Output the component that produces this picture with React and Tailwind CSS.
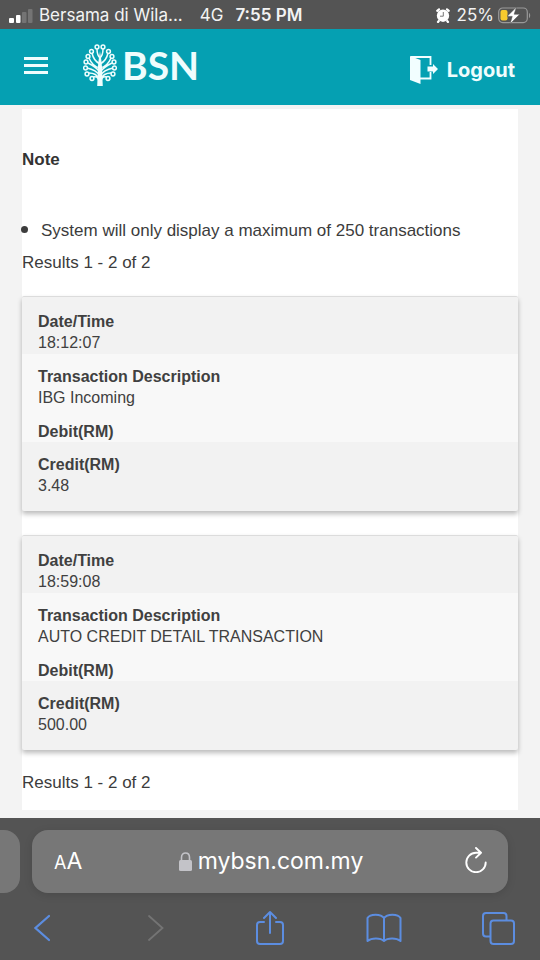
import React from "react";

const transactions = [
  { time: "18:12:07", description: "IBG Incoming", debit: "", credit: "3.48" },
  { time: "18:59:08", description: "AUTO CREDIT DETAIL TRANSACTION", debit: "", credit: "500.00" },
];

function SignalBars() {
  return (
    <svg width="25" height="14" viewBox="0 0 25 14" aria-hidden="true">
      <rect x="0" y="9" width="5" height="5" rx="1" fill="#fff" />
      <rect x="7" y="6" width="4.500" height="8" rx="1" fill="#fff" />
      <rect x="13" y="3" width="4.500" height="11" rx="1" fill="#747474" />
      <rect x="19" y="0" width="4.500" height="14" rx="1" fill="#747474" />
    </svg>
  );
}

function AlarmIcon() {
  return (
    <svg width="14" height="15" viewBox="0 0 14 15" aria-hidden="true">
      <circle cx="7" cy="7.700" r="6.200" fill="#fff" />
      <path d="M1.200 2.800 3 1.300M12.800 2.800 11 1.300M2.800 13l-.8 1M11.200 13l.8 1" stroke="#fff" strokeWidth="2.200" strokeLinecap="round" />
      <path d="M7.300 4v4.200H4" fill="none" stroke="#6a6a6a" strokeWidth=".9" />
    </svg>
  );
}

function BatteryIcon() {
  return (
    <svg width="34" height="17" viewBox="0 0 34 17" aria-hidden="true">
      <rect x=".7" y="1" width="28.600" height="14.600" rx="4" fill="none" stroke="#999" strokeWidth="1.200" />
      <path d="M31 6v5c1.600-.4 1.600-4.600 0-5z" fill="#999" />
      <rect x="2.500" y="3" width="7" height="10.600" rx="2" fill="#f8cb2e" />
      <path d="M18.500 0 9 9.400h5.200L12 17l9.800-9.800h-5.600z" fill="#fff" stroke="#545454" strokeWidth=".6" />
    </svg>
  );
}

const leaves = [
  [14, 3], [20, 3], [8.500, 7.500], [25.500, 7.500], [5, 12.500], [29, 12.500], [3, 18], [31, 18],
  [2.500, 24], [31.500, 24], [4, 30], [30, 30], [9, 34.500], [25, 34.500],
];

function TreeLogo() {
  return (
    <svg width="34" height="43" viewBox="0 0 34 43" fill="none" stroke="#effdfd" aria-hidden="true">
      <path d="M17 7c.8 6 1.600 9 2.100 17 .2 7 .4 11 .7 18h-5.600c.3-7 .5-11 .7-18C15.400 16 16.200 13 17 7z" fill="#effdfd" stroke="none" />
      <path
        d="M17 14c-2-2-3-5-3-9M17 14c2-2 3-5 3-9M17 20c-4-2-7-6-8-11M17 20c4-2 7-6 8-11M17 24c-5-1-9-5-11-10M17 24c5-1 9-5 11-10M17 28c-4-5-8-7-12-9M17 28c4-5 8-7 12-9M17 32c-3-5-8-7-13-8M17 32c3-5 8-7 13-8M16 35c-2-5-6-6-10-6M18 35c2-5 6-6 10-6M16 37c-1-4-3-5-6-4M18 37c1-4 3-5 6-4"
        strokeWidth="1.500"
      />
      {leaves.map(([x, y]) => (
        <circle key={x + "-" + y} cx={x} cy={y} r="1.900" fill="#05a0b2" strokeWidth="1.500" />
      ))}
    </svg>
  );
}

function DoorIcon() {
  return (
    <svg width="28" height="29" viewBox="0 0 28 29" aria-hidden="true">
      <path d="M1 1h19.500v8M20.500 16v6.500H10" fill="none" stroke="#f2feff" strokeWidth="1.800" />
      <path d="M0 0l10.500 4v24L0 24z" fill="#f2feff" />
      <path d="M17.500 10.500h5.500V8l5 5-5 5v-2.500h-5.500z" fill="#f2feff" />
    </svg>
  );
}

function StatusBar() {
  return (
    <div className="flex h-[29px] items-center bg-[#545454] pl-[9px] pr-2 pt-[2px] font-['Inter',sans-serif] text-[17px] text-[#f3f3f3]">
      <SignalBars />
      <span className="ml-[5px]">Bersama di Wila...</span>
      <span className="ml-[17px]">4G</span>
      <span className="ml-3 font-semibold">7:55 PM</span>
      <div className="ml-auto flex items-center">
        <AlarmIcon />
        <span className="ml-[7px] mr-1">25%</span>
        <BatteryIcon />
      </div>
    </div>
  );
}

function Header() {
  return (
    <header className="flex h-[76px] items-center bg-[#05a0b2] pl-6 pr-[25px] text-[#effdfd]">
      <button type="button" aria-label="Menu" className="flex w-6 flex-col gap-1 pb-1">
        <span className="h-[3px] bg-[#effdfd]" />
        <span className="h-[3px] bg-[#effdfd]" />
        <span className="h-[3px] bg-[#effdfd]" />
      </button>
      <a href="#home" className="ml-[35px] flex items-center gap-[5px] pb-1">
        <TreeLogo />
        <span className="font-['Lato',sans-serif] text-[39px] font-bold leading-[40px]">BSN</span>
      </a>
      <button type="button" className="ml-auto flex items-center gap-[9px] pt-[6px] font-['Inter',sans-serif] text-[20px] font-bold">
        <DoorIcon />
        Logout
      </button>
    </header>
  );
}

function Field({ label, value, shaded }) {
  return (
    <div className={shaded ? "bg-[#f2f2f2] px-4 pt-3" : "bg-[#f8f8f8] px-4 pt-3"}>
      <dt className="text-[16px] font-bold leading-[21px]">{label}</dt>
      {value && <dd className="text-[16px] leading-[22px]">{value}</dd>}
    </div>
  );
}

function TransactionCard({ item }) {
  return (
    <dl className="rounded-xs border-t border-[#dcdcdc] bg-[#f2f2f2] pt-[2px] pb-[14px] text-[#404040] shadow-[0_3px_5px_rgba(0,0,0,0.27)]">
      <Field label="Date/Time" value={item.time} shaded />
      <Field label="Transaction Description" value={item.description} />
      <Field label="Debit(RM)" value={item.debit} />
      <Field label="Credit(RM)" value={item.credit} shaded />
    </dl>
  );
}

function BrowserBar() {
  return (
    <footer className="overflow-hidden bg-[#545454] pb-[15px] pt-3 font-['Inter',sans-serif] text-white">
      <div className="flex h-[63px] gap-3">
        <div className="w-5 rounded-r-[16px] bg-[#777]" />
        <div className="flex flex-1 items-center rounded-[16px] bg-[#777] pl-[22px] pr-5 shadow-[0_2px_8px_rgba(0,0,0,0.12)]">
          <button type="button" aria-label="Text size" className="flex w-6 items-baseline">
            <span className="text-[18px]">A</span>
            <span className="text-[23px]">A</span>
          </button>
          <a href="#address" className="flex flex-1 items-center justify-center gap-[6px] text-[23px]">
            <svg width="13" height="19" viewBox="0 0 13 19" aria-hidden="true">
              <rect y="8" width="13" height="11" rx="1.500" fill="#c3c3c8" />
              <path d="M2.500 9V5.500c0-6 8-6 8 0V9" fill="none" stroke="#c3c3c8" strokeWidth="1.600" />
            </svg>
            mybsn.com.my
          </a>
          <button type="button" aria-label="Reload" className="flex w-6 justify-center pb-1">
            <svg width="22" height="26" viewBox="0 0 22 26" fill="none" stroke="#fff" strokeWidth="1.900" strokeLinecap="round" strokeLinejoin="round">
              <path d="M15.500 5.800H11A9.700 9.700 0 1 0 20.700 15.500M11 1l5 4.800-5 4.800" />
            </svg>
          </button>
        </div>
        <div className="w-5" />
      </div>
      <nav className="-mx-[15px] mt-4 grid h-[38px] grid-cols-5 items-center justify-items-center text-[#5c8de0]">
        <button type="button" aria-label="Back">
          <svg width="16" height="28" viewBox="0 0 16 28" fill="none" stroke="currentColor" strokeWidth="2.200" strokeLinecap="round">
            <path d="M15 2 1.500 14 15 26" />
          </svg>
        </button>
        <button type="button" aria-label="Forward" className="text-[#747474]">
          <svg width="16" height="28" viewBox="0 0 16 28" fill="none" stroke="currentColor" strokeWidth="1.800" strokeLinecap="round">
            <path d="M1 2l13.500 12L1 26" />
          </svg>
        </button>
        <button type="button" aria-label="Share">
          <svg width="28" height="36" viewBox="0 0 28 36" fill="none" stroke="currentColor" strokeWidth="2" strokeLinecap="round" strokeLinejoin="round">
            <path d="M8 12H4a3 3 0 0 0-3 3v16a3 3 0 0 0 3 3h20a3 3 0 0 0 3-3V15a3 3 0 0 0-3-3h-4M14 23V2M8 8l6-6 6 6" />
          </svg>
        </button>
        <button type="button" aria-label="Bookmarks">
          <svg width="36" height="30" viewBox="0 0 36 30" fill="none" stroke="currentColor" strokeWidth="2" strokeLinejoin="round">
            <path d="M18 5C15 .5 4 .5 1.500 5v23c4-3.500 13-3.500 16.500 0 3.500-3.500 12.500-3.500 16.500 0V5C32 .5 21 .5 18 5zM18 5v23" />
          </svg>
        </button>
        <button type="button" aria-label="Tabs">
          <svg width="33" height="33" viewBox="0 0 33 33" fill="none" stroke="currentColor" strokeWidth="2" strokeLinejoin="round">
            <path d="M8 24.500H4a3 3 0 0 1-3-3V4a3 3 0 0 1 3-3h17.500a3 3 0 0 1 3 3v4" />
            <rect x="8.500" y="8.500" width="23.500" height="23.500" rx="3" />
          </svg>
        </button>
      </nav>
    </footer>
  );
}

export default function App() {
  return (
    <div className="flex min-h-screen flex-col bg-[#f3f3f3]">
      <StatusBar />
      <Header />
      <main className="flex-1 px-[22px] pb-2 pt-1 font-['Liberation_Sans',Arial,sans-serif] text-[17px] leading-5 text-[#3c3c3c]">
        <div className="bg-white pb-[17px] pt-[41px]">
          <h1 className="font-bold text-[#333]">Note</h1>
          <ul className="mt-[49px] list-disc pl-[19px] marker:text-[22px]">
            <li>System will only display a maximum of 250 transactions</li>
          </ul>
          <p className="mt-3">Results 1 - 2 of 2</p>
          <div className="mt-[23px] flex flex-col gap-6">
            {transactions.map((item) => (
              <TransactionCard key={item.time} item={item} />
            ))}
          </div>
          <p className="mt-[23px]">Results 1 - 2 of 2</p>
        </div>
      </main>
      <BrowserBar />
    </div>
  );
}
